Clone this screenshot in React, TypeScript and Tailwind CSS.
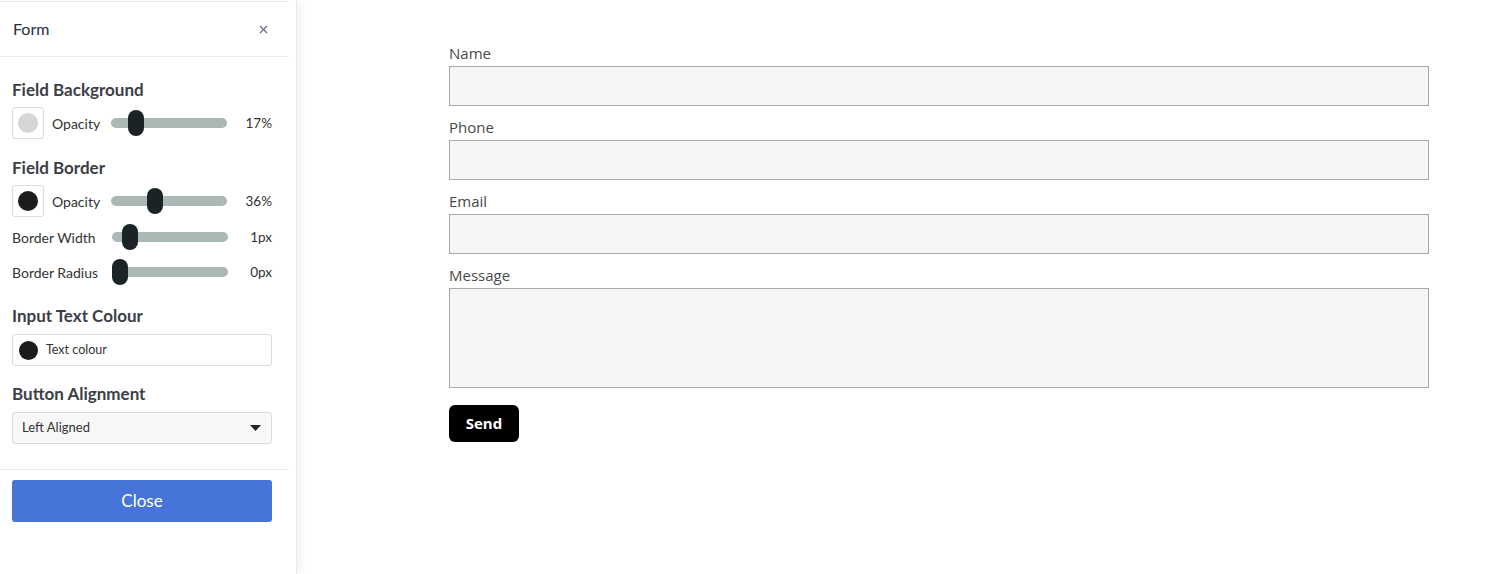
import React from "react";
import { X } from "lucide-react";

const panelFont = { fontFamily: "Lato, 'Noto Sans', sans-serif" };

// slider track is 116px wide, thumb 16px; value is a percentage of travel
const Slider: React.FC<{ value: number }> = ({ value }) => (
  <div className="relative h-[26px] w-[116px] flex items-center">
    <div className="h-[10px] w-full rounded-full bg-[#aab8b6]" />
    <div
      className="absolute top-0 h-[26px] w-[16px] rounded-full bg-[#1b2327]"
      style={{ left: `${value}px` }}
    />
  </div>
);

const SwatchRow: React.FC<{ color: string; pos: number; value: string }> = ({ color, pos, value }) => (
  <div className="mt-[7px] flex items-center h-[32px]">
    <div className="w-[32px] h-[32px] rounded-[3px] border border-[#dcdcdc] flex items-center justify-center bg-white">
      <div className={`w-[20px] h-[20px] rounded-full ${color}`} />
    </div>
    <span className="ml-[8px] w-[59px] text-[14px] text-[#333]">Opacity</span>
    <Slider value={pos} />
    <span className="flex-1 text-right text-[13.5px] text-[#333]">{value}</span>
  </div>
);

const LabelRow: React.FC<{ label: string; pos: number; value: string; className: string }> = ({
  label,
  pos,
  value,
  className,
}) => (
  <div className={`flex items-center h-[20px] ${className}`}>
    <span className="w-[100px] text-[14px] text-[#333]">{label}</span>
    <Slider value={pos} />
    <span className="flex-1 text-right text-[13.5px] text-[#333]">{value}</span>
  </div>
);

const Title: React.FC<{ children: React.ReactNode; className: string }> = ({ children, className }) => (
  <h3 className={`h-[20px] leading-[20px] text-[17px] font-bold text-[#3b3e46] ${className}`}>{children}</h3>
);

const Field: React.FC<{ label: string; tall?: boolean }> = ({ label, tall }) => (
  <div className="mb-[11px]">
    <div className="h-[20px] leading-[20px] mb-[3px] text-[15px] text-[#4a4a4a]">{label}</div>
    <div
      className={`w-full ${tall ? "h-[100px]" : "h-[40px]"} bg-[#f6f6f6] border border-[#a9a9a9]`}
    />
  </div>
);

export default function App() {
  return (
    <div className="flex w-[1486px] h-[574px] bg-white overflow-hidden">
      {/* Settings panel */}
      <aside
        className="w-[297px] h-full shrink-0 bg-white border-r border-[#e9e9e9] shadow-[4px_0_8px_rgba(0,0,0,0.05)] z-10"
        style={panelFont}
      >
        <div className="w-[289px]">
          <div className="mt-[1px] h-[56px] border-t border-b border-[#e8ebf0] flex items-center justify-between pl-[13px] pr-[19px]">
            <span className="text-[16px] text-[#1f2d3d]">Form</span>
            <X className="w-[13px] h-[13px] text-[#5f6b7a]" strokeWidth={2} />
          </div>

          <div className="px-3 w-[284px]">
            <Title className="mt-[23px]">Field Background</Title>
            <SwatchRow color="bg-[#d6d6d6]" pos={17} value="17%" />

            <Title className="mt-[19px]">Field Border</Title>
            <SwatchRow color="bg-[#1c1c1c]" pos={36} value="36%" />
            <LabelRow label="Border Width" pos={10} value="1px" className="mt-[10px]" />
            <LabelRow label="Border Radius" pos={0} value="0px" className="mt-[15px]" />

            <Title className="mt-[24px]">Input Text Colour</Title>
            <div className="mt-[8px] h-[32px] rounded-[3px] border border-[#dcdcdc] flex items-center px-[6px]">
              <div className="w-[19px] h-[19px] rounded-full bg-[#1c1c1c]" />
              <span className="ml-[8px] text-[12.5px] text-[#333]">Text colour</span>
            </div>

            <Title className="mt-[18px]">Button Alignment</Title>
            <div className="mt-[8px] h-[32px] rounded-[3px] border border-[#dcdcdc] bg-[#f7f7f7] flex items-center justify-between pl-[9px] pr-[10px]">
              <span className="text-[13px] text-[#333]">Left Aligned</span>
              <svg width="11" height="6" viewBox="0 0 11 6">
                <path d="M0 0h11L5.5 6z" fill="#222" />
              </svg>
            </div>
          </div>

          <div className="mt-[25px] border-t border-[#e8ebf0]" />
          <div className="px-3 w-[284px]">
            <button className="mt-[10px] w-full h-[42px] rounded-[3px] bg-[#4674d8] text-white text-[17px]">
              Close
            </button>
          </div>
        </div>
      </aside>

      {/* Form preview */}
      <main className="flex-1 pl-[152px] pt-[43px]" style={{ fontFamily: "'Open Sans', Lato, sans-serif" }}>
        <div className="w-[980px]">
          <Field label="Name" />
          <Field label="Phone" />
          <Field label="Email" />
          <Field label="Message" tall />
          <button className="mt-[6px] w-[70px] h-[37px] rounded-[6px] bg-black text-white text-[15px] font-bold">
            Send
          </button>
        </div>
      </main>
    </div>
  );
}
